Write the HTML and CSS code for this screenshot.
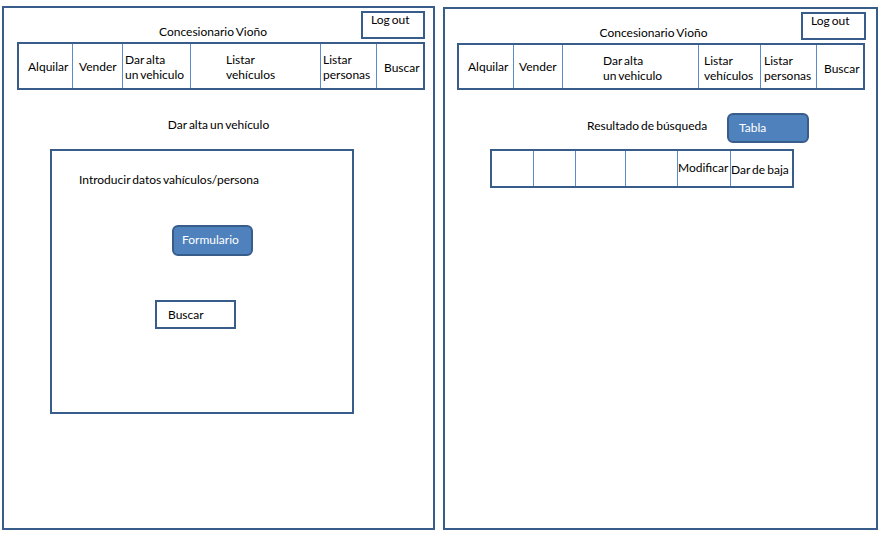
FILE: index.html
```html
<!DOCTYPE html>
<html lang="es">
<head>
<meta charset="utf-8">
<title>Concesionario Vioño</title>
<link rel="stylesheet" href="styles.css">
</head>
<body>
  <section class="panel panel-left">
    <header class="header">
      <div class="title">Concesionario Vioño</div>
      <div class="logout">Log out</div>
    </header>
    <nav class="nav nav-left">
      <div class="cell c-alq">Alquilar</div>
      <div class="cell c-ven">Vender</div>
      <div class="cell c-alta two">Dar alta<br>un vehiculo</div>
      <div class="cell c-lveh two">Listar<br>vehículos</div>
      <div class="cell c-lper two">Listar<br>personas</div>
      <div class="cell c-bus">Buscar</div>
    </nav>
    <h2 class="heading">Dar alta un vehículo</h2>
    <div class="form-box">
      <p class="intro">Introducir datos vahículos/persona</p>
      <div class="btn btn-form">Formulario</div>
      <div class="search-box">Buscar</div>
    </div>
  </section>

  <section class="panel panel-right">
    <header class="header">
      <div class="title">Concesionario Vioño</div>
      <div class="logout">Log out</div>
    </header>
    <nav class="nav nav-right">
      <div class="cell c-alq">Alquilar</div>
      <div class="cell c-ven">Vender</div>
      <div class="cell c-alta two">Dar alta<br>un vehiculo</div>
      <div class="cell c-lveh two">Listar<br>vehículos</div>
      <div class="cell c-lper two">Listar<br>personas</div>
      <div class="cell c-bus">Buscar</div>
    </nav>
    <div class="result-row">
      <div class="result-label">Resultado de búsqueda</div>
      <div class="btn btn-tabla">Tabla</div>
    </div>
    <div class="table">
      <div class="tcell"></div>
      <div class="tcell"></div>
      <div class="tcell"></div>
      <div class="tcell"></div>
      <div class="tcell t-mod">Modificar</div>
      <div class="tcell t-baja">Dar de baja</div>
    </div>
  </section>
</body>
</html>
```

FILE: styles.css
```css
* { box-sizing: border-box; }

html, body {
  margin: 0;
  background: #ffffff;
}

body {
  display: flex;
  align-items: flex-start;
  gap: 8px;
  padding: 6px 0 0 2px;
  font-family: "Lato", "Open Sans", sans-serif;
  font-size: 12px;
  line-height: 15px;
  color: #000;
  word-spacing: -1px;
}

.panel {
  border: 2px solid #385d8a;
  height: 524px;
  display: flex;
  flex-direction: column;
  align-items: flex-start;
}

.panel-left { width: 433px; }
.panel-right { width: 435px; margin-top: 1px; height: 523px; }

.header {
  display: flex;
  align-items: flex-start;
  width: 100%;
  padding-right: 8px;
}
.panel-right .header { padding-right: 10px; }

.title {
  flex: 1;
  text-align: center;
  padding-left: 61px;
  padding-top: 16px;
}

.logout {
  margin-top: 3px;
  width: 64px;
  height: 28px;
  border: 2px solid #385d8a;
  padding-left: 8px;
  line-height: 14px;
}
.panel-right .logout { width: 65px; }

.nav {
  display: grid;
  margin-top: 3px;
  margin-left: 13px;
  width: 408px;
  height: 48px;
  border: 2px solid #385d8a;
}
.panel-right .nav { margin-left: 12px; margin-top: 3px; height: 47px; }

.nav-left { grid-template-columns: 53px 50px 68px 130px 56px 47px; }
.nav-right { grid-template-columns: 54px 49px 136px 62px 56px 47px; }

.cell {
  display: flex;
  align-items: center;
  border-left: 1px solid #5b8bc8;
}
.cell.c-alq { border-left: none; }
.cell.two { padding-top: 2px; }
.cell.c-bus { padding-top: 3px; }

.nav-left .c-alq { padding-left: 9px; }
.nav-left .c-ven { padding-left: 6px; }
.nav-left .c-alta { padding-left: 2px; }
.nav-left .c-lveh { padding-left: 35px; }
.nav-left .c-lper { padding-left: 2px; }
.nav-left .c-bus { padding-left: 7px; }

.nav-right .c-alq { padding-left: 9px; }
.nav-right .c-ven { padding-left: 5px; }
.nav-right .c-alta { padding-left: 40px; }
.nav-right .c-lveh { padding-left: 5px; }
.nav-right .c-lper { padding-left: 3px; }
.nav-right .c-bus { padding-left: 7px; }

.heading {
  margin: 27px 0 0;
  width: 100%;
  text-align: center;
  font-size: inherit;
  font-weight: normal;
}

.form-box {
  margin: 17px 0 0 46px;
  width: 304px;
  height: 265px;
  border: 2px solid #385d8a;
  padding: 21px 0 0 27px;
}

.intro { margin: 0; }

.btn {
  background: #4f81bd;
  border: 2px solid #385d8a;
  border-radius: 6px;
  color: #fff;
  display: flex;
  align-items: center;
}

.btn-form {
  margin: 38px 0 0 93px;
  width: 81px;
  height: 31px;
  padding-left: 8px;
  padding-bottom: 2px;
}

.search-box {
  margin: 44px 0 0 76px;
  width: 81px;
  height: 29px;
  border: 2px solid #385d8a;
  padding: 5px 0 0 11px;
}

.result-row {
  display: flex;
  margin: 23px 0 0 142px;
}

.result-label {
  width: 140px;
  padding-top: 5px;
}

.btn-tabla {
  width: 82px;
  height: 30px;
  padding-left: 10px;
  padding-bottom: 2px;
}

.table {
  display: grid;
  grid-template-columns: 41px 42px 50px 52px 53px 61px;
  margin: 6px 0 0 45px;
  width: 304px;
  height: 39px;
  border: 2px solid #385d8a;
}

.tcell {
  border-left: 1px solid #5b8bc8;
  display: flex;
  align-items: center;
  white-space: nowrap;
}
.tcell:first-child { border-left: none; }
.t-mod { padding-bottom: 2px; }
.t-baja { padding-top: 1px; }
```
